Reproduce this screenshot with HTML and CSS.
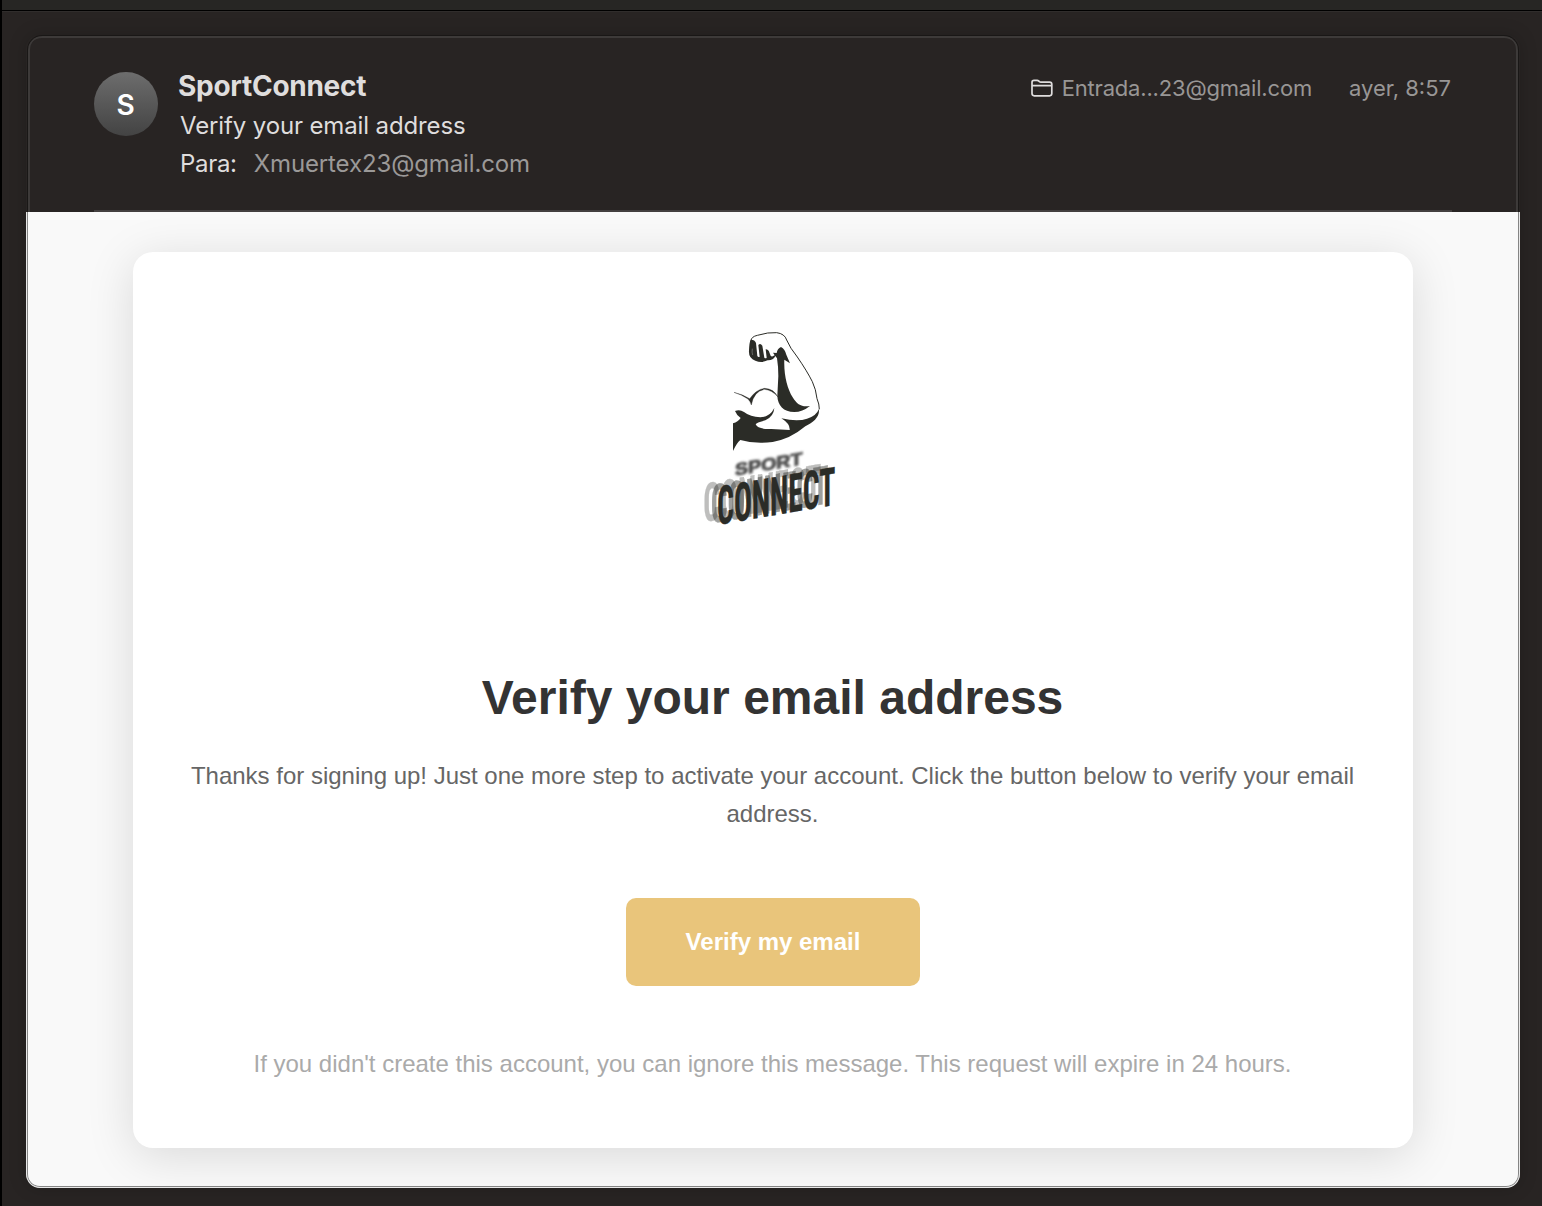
FILE: index.html
```html
<!DOCTYPE html>
<html lang="es">
<head>
<meta charset="utf-8">
<title>Verify your email address</title>
<link rel="stylesheet" href="styles.css">
</head>
<body>
<div class="toolbar"></div>
<main class="viewer">
  <article class="message">
    <header class="message-header">
      <div class="avatar">S</div>
      <div class="details">
        <div class="sender"><span>SportConnect</span></div>
        <div class="subject"><span>Verify your email address</span></div>
        <div class="recipient"><span class="label">Para:</span><span class="address">Xmuertex23@gmail.com</span></div>
      </div>
      <div class="meta">
        <svg class="folder" width="22" height="18" viewBox="0 0 22 18" fill="none" stroke="currentColor" stroke-width="1.7"><path d="M1 14.6V3.4Q1 1.4 3 1.4H6.2Q7 1.4 7.7 2L8.4 2.6Q9 3.1 9.8 3.1H18.6Q20.8 3.1 20.8 5.2V14.6Q20.8 16.8 18.6 16.8H3.2Q1 16.8 1 14.6ZM1 6.6H21"/></svg>
        <span class="mailbox">Entrada...23@gmail.com</span>
        <span class="date">ayer, 8:57</span>
      </div>
    </header>
    <section class="message-body">
      <div class="card">
        <svg class="logo" width="160" height="220" viewBox="0 0 480 660">
          <defs><filter id="soft" x="-10%" y="-30%" width="120%" height="160%"><feGaussianBlur stdDeviation="2.6"/></filter></defs>
          <g fill="#2b2c27">
            <path d="M183 62Q184 50 202 46Q235 36 260 38Q284 41 290 60Q300 84 322 111Q351 153 367 185Q378 208 381 236Q388 252 388 268" fill="none" stroke="#2b2c27" stroke-width="3"/>
            <path d="M182 59Q195 59 198 69L202 108Q205 113 209 110L205 75Q211 68 217 77L223 113Q227 116 230 113L227 88Q236 88 239 100Q242 112 248 109L254 106L249 98L260 99Q262 86 273 81Q285 88 289 104L300 130L283 119C281 165 292 206 308 232C322 255 336 262 360 258Q337 276 313 276C280 276 263 255 262 227L265 168Q265 139 261 115L256 108Q249 122 233 121Q215 130 196 122Q175 115 177 91Q178 66 182 59Z"/>
            <path d="M187 86Q185 97 188 105" fill="none" stroke="#aaa" stroke-width="1.4"/>
            <path d="M132 217Q154 222 179 236Q200 207 224 205Q251 206 264 231Q246 210 223 208Q191 214 184 255Q181 244 174 237Q155 224 132 217Z" stroke="#2b2c27"/>
            <path d="M135 273Q149 267 162 276Q181 291 211 292Q240 291 253 264Q251 290 226 301Q200 307 197 313Q205 329 244 327L299 330Q301 312 274 295Q323 306 351 296Q379 288 387 267C389 292 370 306 346 319Q301 357 248 366Q195 373 151 360Q140 369 129 393V310Q144 306 152 294Q140 286 135 273Z"/>
          </g>
          <g fill="#2b2c27" stroke="#2b2c27" stroke-linejoin="round" class="wordmark">
            <text transform="translate(40 606) skewY(-9.7)" textLength="354" lengthAdjust="spacingAndGlyphs" opacity=".3">CONNECT</text>
            <text transform="translate(62 610) skewY(-9.7)" textLength="354" lengthAdjust="spacingAndGlyphs" opacity=".45">CONNECT</text>
            <text transform="translate(81 615) skewY(-9.7)" textLength="355" lengthAdjust="spacingAndGlyphs">CONNECT</text>
          </g>
          <text class="wordmark-top" transform="translate(135 467) skewY(-9.5)" textLength="202" lengthAdjust="spacingAndGlyphs" filter="url(#soft)">SPORT</text>
        </svg>
        <h1>Verify your email address</h1>
        <p class="intro">Thanks for signing up! Just one more step to activate your account. Click the button below to verify your email address.</p>
        <a class="button">Verify my email</a>
        <p class="note">If you didn't create this account, you can ignore this message. This request will expire in 24 hours.</p>
      </div>
    </section>
  </article>
</main>
</body>
</html>
```
FILE: styles.css
```css
* { box-sizing: border-box; }
body {
  margin: 0;
  height: 1206px;
  overflow: hidden;
  background: #282423;
  border-left: 2px solid #000;
  font-family: Inter, "Liberation Sans", sans-serif;
  color: #dfdddd;
}
.toolbar {
  height: 12px;
  background: #272624;
  border-bottom: 1px solid #302d2c;
  box-shadow: inset 0 -1px #000;
}
.viewer { padding: 23px 22px 18px 24px; }
.message {
  height: 1153px;
  border-radius: 14px;
  box-shadow: 0 0 18px rgba(0, 0, 0, .18);
  display: flex;
  flex-direction: column;
}
.message-header {
  height: 177px;
  margin: 0 1px;
  border: 1px solid #191716;
  border-bottom: 0;
  border-radius: 15px 15px 0 0;
  box-shadow: inset 2px 0 #3d3a39, inset -2px 0 #3d3a39, inset 0 2px #3d3a39;
  padding: 36px 66px 0;
  display: flex;
  background: linear-gradient(#433f3f, #433f3f) 66px 100% / 1358px 2px no-repeat;
}
.avatar {
  width: 64px;
  height: 64px;
  border-radius: 50%;
  background: linear-gradient(#6d6d6d, #434343);
  color: #fff;
  font-size: 28px;
  font-weight: 600;
  line-height: 66px;
  text-align: center;
  text-indent: -1px;
}
.details { margin-left: 20px; white-space: nowrap; }
.sender { font-size: 28px; font-weight: 650; line-height: 28px; letter-spacing: -.28px; }
.subject, .recipient { margin-left: 2px; font-size: 24px; line-height: 38px; letter-spacing: -.13px; }
.subject { margin-top: 7px; }
.recipient .label { letter-spacing: -.3px; }
.recipient .address { margin-left: 17px; color: #9b9998; letter-spacing: -.12px; }
.meta {
  margin-left: auto;
  margin-right: 1px;
  display: flex;
  align-items: center;
  height: 32px;
  font-size: 22px;
  color: #989695;
  white-space: nowrap;
}
.folder { color: #dfdddd; margin-right: 9px; }
.mailbox { letter-spacing: -.18px; }
.date { margin-left: 37px; }
.message-body {
  flex: 1;
  background: #f9f9f9;
  border: 1px solid #e8e8e8;
  border-top: 0;
  border-radius: 0 0 14px 14px;
  box-shadow: inset 0 -1px #858585, inset 1px 0 #858585, inset -1px 0 #858585;
  padding: 40px 106px 0;
  overflow: hidden;
}
.card {
  height: 896px;
  border-radius: 20px;
  background: #fff;
  box-shadow: 0 8px 48px rgba(0, 0, 0, .13);
  padding: 68px 41px 0 40px;
  display: flex;
  flex-direction: column;
  align-items: center;
  font-family: "Liberation Sans", Arial, sans-serif;
  text-align: center;
}
.logo { display: block; margin-right: 5px; flex: none; overflow: visible; }
.wordmark { font: 700 160px Roboto, "Liberation Sans", sans-serif; font-stretch: 75%; stroke-width: 1px; }
.wordmark-top { font: bold 48px "Liberation Sans", sans-serif; fill: #555; stroke: #555; stroke-width: 3px; }
h1 { margin: 130px 0 0; font-size: 48px; line-height: 56px; color: #333; }
p { margin: 0; font-size: 24px; line-height: 38px; }
.intro { margin-top: 31px; color: #666; }
.button {
  margin: 65px -1px 0 0;
  width: 294px;
  height: 88px;
  border-radius: 10px;
  background: #e9c57b;
  color: #fff;
  font-size: 24px;
  font-weight: bold;
  line-height: 88px;
}
.note { margin-top: 59px; color: #aaa; }
```
